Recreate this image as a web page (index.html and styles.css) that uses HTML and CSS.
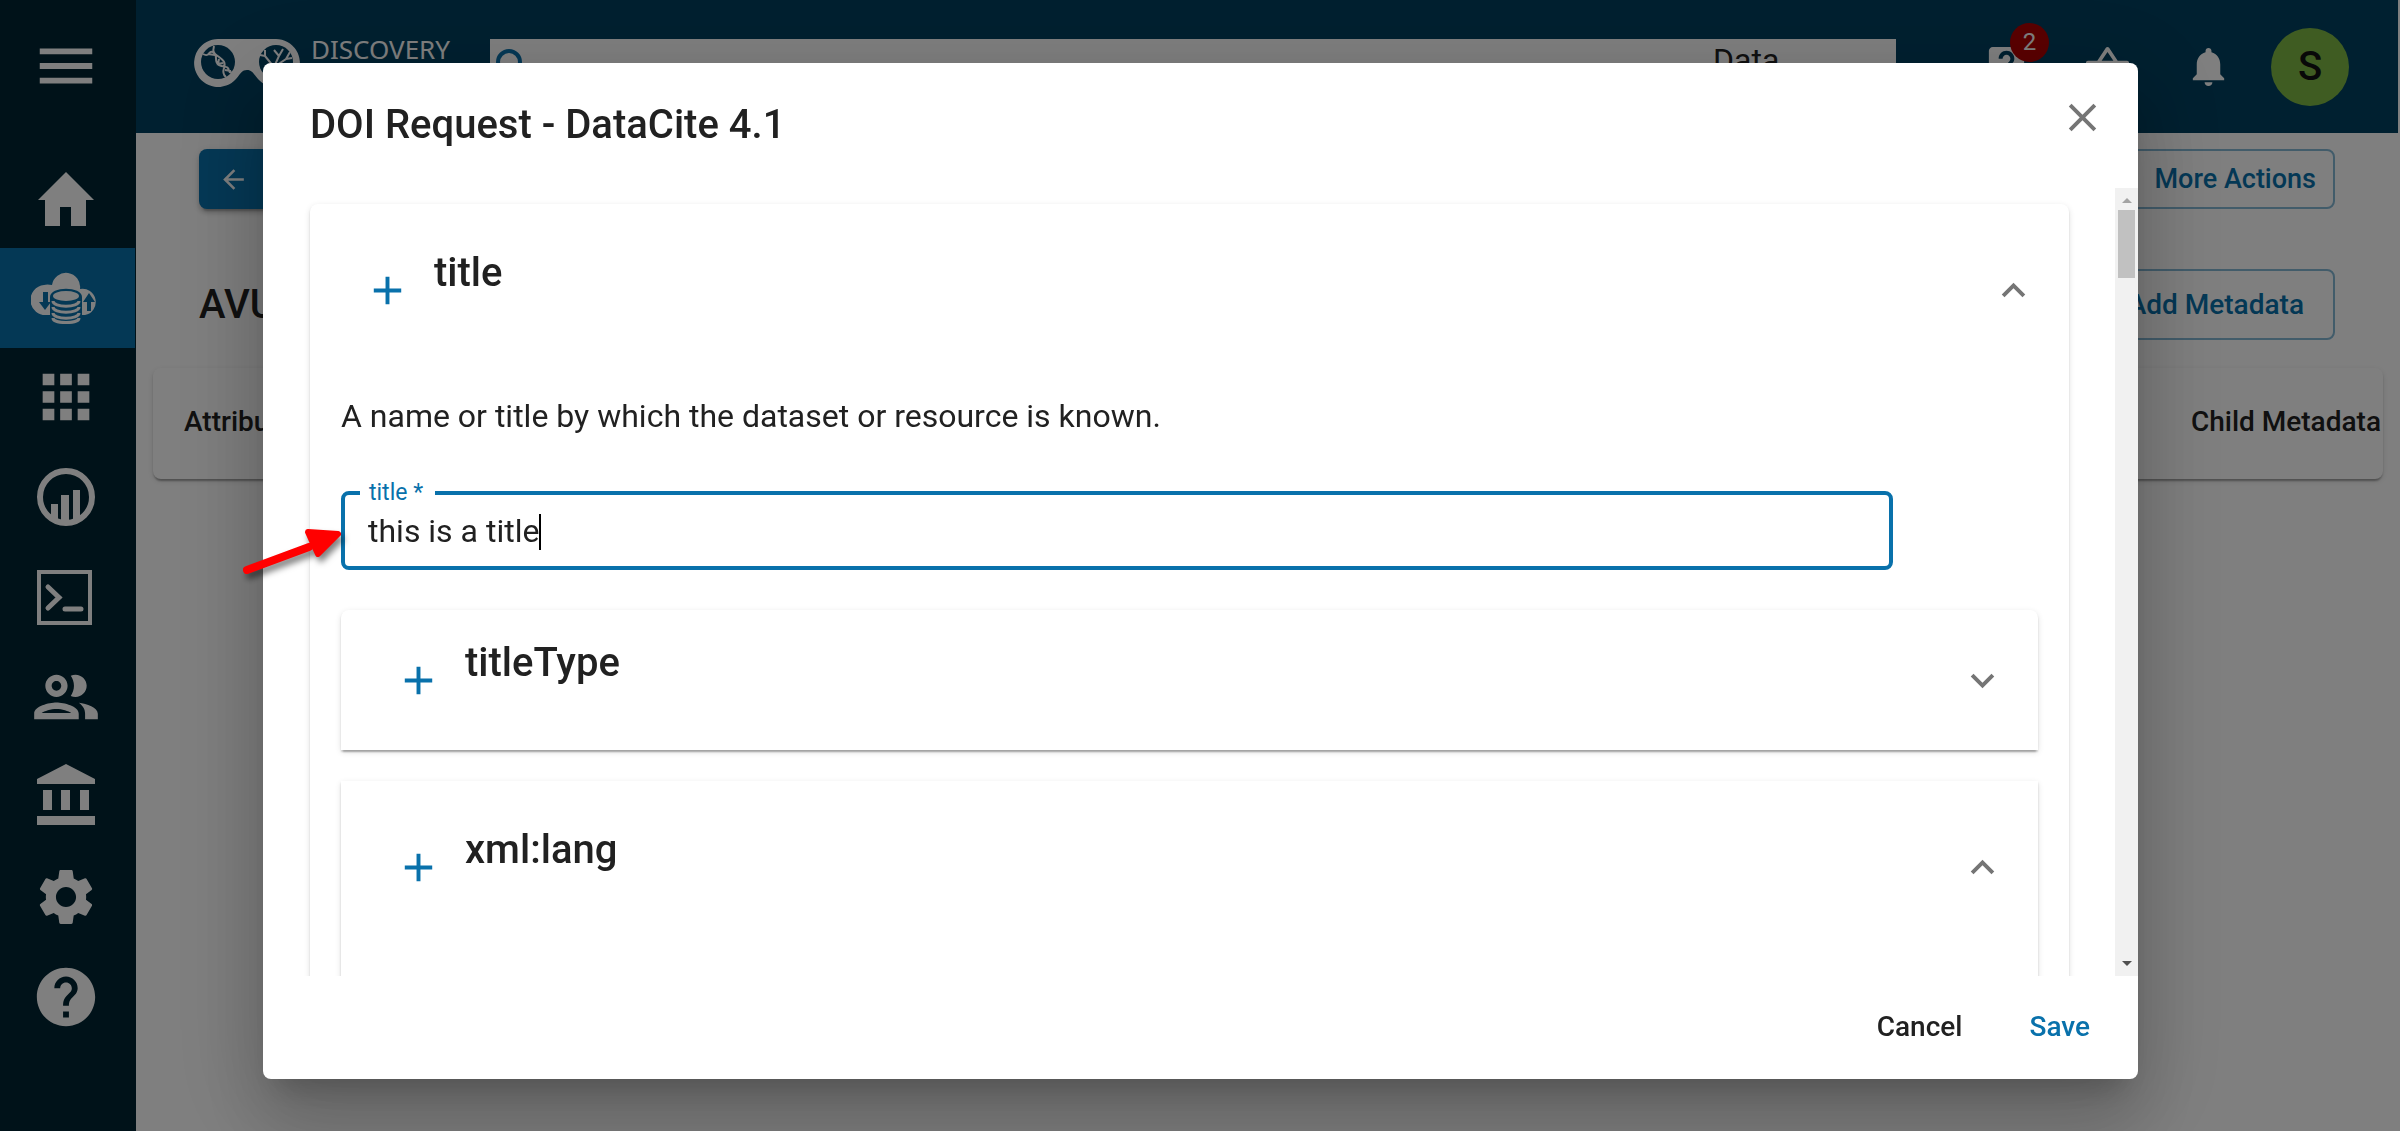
FILE: index.html
```html
<!DOCTYPE html>
<html lang="en">
<head>
<meta charset="utf-8">
<meta name="viewport" content="width=device-width, initial-scale=1">
<title>Discovery Environment</title>
<link rel="stylesheet" href="styles.css">
</head>
<body>
<div class="app">
  <nav class="sidebar" aria-label="Main">
    <button class="menu-button" type="button" aria-label="Menu"><svg class="icon-nav" viewBox="0 0 24 24"><path d="M3 18h18v-2H3v2zm0-5h18v-2H3v2zm0-7v2h18V6H3z"/></svg></button>
    <a class="nav-item" href="#home" aria-label="Home"><svg class="icon-nav" viewBox="0 0 70 70"><path d="M35 10L7 38h7v26h15V45h11v19h15V38h8z"/></svg></a>
    <a class="nav-item active" href="#data" aria-label="Data"><svg class="icon-nav" viewBox="0 0 70 70"><g transform="translate(0 -4)"><path d="M16 57a15 15 0 0 1-3-30q3-1 8 0a14 14 0 0 1 28 4 13 13 0 0 1 5 26z"/><path class="hole" d="M12 34h5v10h3l-6 8-6-8h4zM56 53v-9h-4l6-9 6 9h-4v9z" /><path class="hole" d="M19 39c0-11 32-11 32 0v19c0 9-32 9-32 0z"/><ellipse cx="35" cy="38" rx="13" ry="5"/><path class="ring" d="M22 43c0 7 26 7 26 0M22 49c0 7 26 7 26 0M22 55c0 7 26 7 26 0M22 60c0 6 26 6 26 0"/></g></svg></a>
    <a class="nav-item" href="#apps" aria-label="Apps"><svg class="icon-nav" viewBox="0 0 24 24"><path d="M4 8h4V4H4v4zm6 12h4v-4h-4v4zm-6 0h4v-4H4v4zm0-6h4v-4H4v4zm6 0h4v-4h-4v4zm6-10v4h4V4h-4zm-6 4h4V4h-4v4zm6 6h4v-4h-4v4zm0 6h4v-4h-4v4z"/></svg></a>
    <a class="nav-item" href="#analyses" aria-label="Analyses"><svg class="icon-nav" viewBox="0 0 70 70"><circle class="line" cx="35" cy="35" r="26"/><path d="M20 42h7v18l-7-4zM30 33h8v27h-8zM42 28h7v28l-7 4z"/></svg></a>
    <a class="nav-item" href="#vice" aria-label="Terminal"><svg class="icon-nav" viewBox="0 0 70 70"><path class="line square" d="M8 10h51v51H8z"/><path class="line thin" d="M17 25l11 10.500-11 10.500M34 47h16"/></svg></a>
    <a class="nav-item" href="#teams" aria-label="Teams"><svg class="icon-nav" viewBox="1 1 22 22"><path d="M9 13.750c-2.340 0-7 1.170-7 3.500V19h14v-1.750c0-2.330-4.660-3.500-7-3.500zM4.340 17c.84-.58 2.870-1.250 4.660-1.250s3.820.67 4.660 1.250H4.340zM9 12c1.930 0 3.500-1.570 3.500-3.500S10.930 5 9 5 5.500 6.570 5.500 8.500 7.070 12 9 12zm0-5c.83 0 1.500.67 1.500 1.500S9.830 10 9 10s-1.500-.67-1.500-1.500S8.170 7 9 7zm7.040 6.810c1.160.84 1.960 1.960 1.960 3.440V19h4v-1.750c0-2.020-3.500-3.170-5.960-3.440zM15 12c1.930 0 3.500-1.570 3.500-3.500S16.930 5 15 5c-.54 0-1.040.13-1.500.35.63.89 1 1.980 1 3.150s-.37 2.260-1 3.150c.46.22.96.35 1.500.35z"/></svg></a>
    <a class="nav-item" href="#collections" aria-label="Collections"><svg class="icon-nav" viewBox="0 0 70 70"><path d="M35 2L6 17v5h58v-5zM12 28h9v20h-9zM30 28h9v20h-9zM49 28h9v20h-9zM6 54h58v9H6z"/></svg></a>
    <a class="nav-item" href="#settings" aria-label="Settings"><svg class="icon-nav" viewBox="-.5 -.5 25 25"><path d="M19.140 12.940c.04-.3.060-.61.060-.94 0-.32-.02-.64-.07-.94l2.030-1.580c.18-.14.23-.41.120-.61l-1.920-3.320c-.12-.22-.37-.29-.59-.22l-2.390.960c-.5-.38-1.030-.7-1.620-.94l-.36-2.540c-.04-.24-.24-.41-.48-.41h-3.840c-.24 0-.43.17-.47.41l-.36 2.540c-.59.24-1.130.57-1.620.94l-2.390-.96c-.22-.08-.47 0-.59.220L2.740 8.870c-.12.21-.08.47.12.610l2.030 1.580c-.05.3-.09.63-.09.94s.02.640.070.940l-2.030 1.580c-.18.14-.23.41-.12.610l1.920 3.320c.12.22.37.29.59.220l2.390-.96c.5.38 1.030.7 1.620.940l.36 2.540c.05.24.24.41.48.410h3.840c.24 0 .44-.17.470-.41l.36-2.540c.59-.24 1.130-.56 1.620-.94l2.390.960c.22.08.47 0 .59-.22l1.920-3.320c.12-.22.07-.47-.12-.61l-2.010-1.580zM12 15.600c-1.980 0-3.600-1.620-3.600-3.600s1.620-3.600 3.600-3.600 3.600 1.620 3.600 3.600-1.620 3.600-3.600 3.600z"/></svg></a>
    <a class="nav-item" href="#help" aria-label="Help"><svg class="icon-nav" viewBox="0 0 24 24"><path d="M12 2C6.480 2 2 6.480 2 12s4.480 10 10 10 10-4.480 10-10S17.520 2 12 2zm1 17h-2v-2h2v2zm2.070-7.750l-.9.920C13.450 12.900 13 13.500 13 15h-2v-.5c0-1.100.45-2.100 1.170-2.830l1.240-1.260c.37-.36.59-.86.59-1.410 0-1.100-.9-2-2-2s-2 .9-2 2H8c0-2.210 1.790-4 4-4s4 1.790 4 4c0 .88-.36 1.680-.93 2.250z"/></svg></a>
  </nav>

  <div class="page">
    <header class="topbar">
      <a class="brand" href="#top">
        <svg class="brand-mark" viewBox="0 0 106 48"><path class="goggle" d="M24 0h58a24 24 0 1 1-18 40c-5-6-6-9-11-9s-6 3-11 9A24 24 0 1 1 24 0z"/><circle class="lens" cx="24" cy="23" r="17"/><circle class="lens" cx="82" cy="23" r="17"/><path class="twig" d="M9 15c7 4 5-4 10-2 6 3 0 10 6 13s9 0 10 6c1 3 4 1 5 0M20 7c-2 7 1 8 5 11s7 5 5 11 1 8 2 9M14 15l7 1M25 20l-1 5 5-1M31 31l6 1"/><path class="twig" d="M80 38V28l-9-11M71 17l-5-1M71 17v-6M80 28l5-11-5-6M85 17l4-7M80 28l12-8 4-7M92 20l6-1"/></svg>
        <span class="brand-name">DISCOVERY</span>
      </a>
      <form class="search" role="search">
        <svg class="icon-search" viewBox="0 0 40 40"><circle cx="15" cy="15" r="11"/><path d="M23 23l12 12"/></svg>
        <input class="search-input" type="search" aria-label="Search">
        <button class="search-scope" type="button">Data</button>
      </form>
      <div class="top-actions">
        <button class="top-button" type="button" aria-label="Support"><svg class="icon" viewBox="0 0 24 24"><path d="M19 2H5c-1.110 0-2 .9-2 2v14c0 1.100.89 2 2 2h4l3 3 3-3h4c1.100 0 2-.9 2-2V4c0-1.100-.9-2-2-2zm-6 16h-2v-2h2v2zm2.070-7.750l-.9.920C13.450 11.900 13 12.500 13 14h-2v-.5c0-1.100.45-2.100 1.170-2.830l1.240-1.260c.37-.36.59-.86.59-1.410 0-1.100-.9-2-2-2s-2 .9-2 2H8c0-2.210 1.790-4 4-4s4 1.790 4 4c0 .88-.36 1.680-.93 2.250z"/></svg><span class="badge">2</span></button>
        <button class="top-button" type="button" aria-label="Bag"><svg class="icon" viewBox="0 0 24 24"><path d="M17.210 9l-4.380-6.560c-.19-.28-.51-.42-.83-.42-.32 0-.64.14-.83.430L6.790 9H2c-.55 0-1 .45-1 1 0 .09.010.18.040.27l2.540 9.270c.23.84 1 1.460 1.920 1.460h13c.92 0 1.690-.62 1.930-1.460l2.540-9.270L23 10c0-.55-.45-1-1-1h-4.790zM9 9l3-4.400L15 9H9z"/></svg></button>
        <button class="top-button" type="button" aria-label="Notifications"><svg class="icon" viewBox="0 0 24 24"><path d="M12 22c1.100 0 2-.9 2-2h-4c0 1.100.89 2 2 2zm6-6v-5c0-3.070-1.640-5.640-4.500-6.320V4c0-.83-.67-1.500-1.500-1.500s-1.500.67-1.500 1.500v.68C7.630 5.360 6 7.920 6 11v5l-2 2v1h16v-1l-2-2z"/></svg></button>
        <button class="avatar" type="button" aria-label="Account">S</button>
      </div>
    </header>

    <main class="content">
      <div class="toolbar">
        <button class="back-button" type="button" aria-label="Back"><svg class="icon-back" viewBox="0 0 24 24"><path d="M20 11H7.830l5.590-5.590L12 4l-8 8 8 8 1.410-1.410L7.830 13H20v-2z"/></svg></button>
        <button class="outline-button" type="button">More Actions</button>
      </div>
      <div class="toolbar">
        <h2 class="heading">AVUs</h2>
        <button class="outline-button large" type="button">Add Metadata</button>
      </div>
      <div class="table-card">
        <table class="metadata">
          <thead><tr><th scope="col">Attribute</th><th class="last" scope="col">Child Metadata</th></tr></thead>
        </table>
      </div>
    </main>
  </div>
</div>

<div class="backdrop">
  <section class="dialog" role="dialog" aria-modal="true" aria-labelledby="dialog-title">
    <header class="dialog-header">
      <h1 class="heading" id="dialog-title">DOI Request - DataCite 4.1</h1>
      <button class="icon-button close" type="button" aria-label="Close"><svg class="icon" viewBox="0 0 24 24"><path d="M19 6.410L17.590 5 12 10.590 6.410 5 5 6.410 10.590 12 5 17.590 6.410 19 12 13.410 17.590 19 19 17.590 13.410 12z"/></svg></button>
    </header>
    <div class="dialog-body">
      <div class="dialog-content">
        <section class="panel">
          <div class="panel-header open">
            <button class="icon-button add" type="button" aria-label="Add title"><svg class="icon" viewBox="0 0 24 24"><path d="M19 13h-6v6h-2v-6H5v-2h6V5h2v6h6v2z"/></svg></button>
            <h2 class="heading">title</h2>
            <button class="icon-button" type="button" aria-label="Collapse title"><svg class="icon" viewBox="0 0 24 24"><path d="M12 8l-6 6 1.410 1.410L12 10.830l4.590 4.580L18 14z"/></svg></button>
          </div>
          <div class="panel-body">
            <p class="description">A name or title by which the dataset or resource is known.</p>
            <div class="field">
              <label class="field-label" for="title-input">title *</label>
              <input class="field-input" id="title-input" type="text" value="this is a title" required autofocus>
              <span class="caret"></span>
            </div>
            <section class="panel">
              <div class="panel-header">
                <button class="icon-button add" type="button" aria-label="Add titleType"><svg class="icon" viewBox="0 0 24 24"><path d="M19 13h-6v6h-2v-6H5v-2h6V5h2v6h6v2z"/></svg></button>
                <h3 class="heading">titleType</h3>
                <button class="icon-button" type="button" aria-label="Expand titleType"><svg class="icon" viewBox="0 0 24 24"><path d="M16.590 8.590L12 13.170 7.410 8.590 6 10l6 6 6-6z"/></svg></button>
              </div>
            </section>
            <section class="panel">
              <div class="panel-header open">
                <button class="icon-button add" type="button" aria-label="Add xml:lang"><svg class="icon" viewBox="0 0 24 24"><path d="M19 13h-6v6h-2v-6H5v-2h6V5h2v6h6v2z"/></svg></button>
                <h3 class="heading">xml:lang</h3>
                <button class="icon-button" type="button" aria-label="Collapse xml:lang"><svg class="icon" viewBox="0 0 24 24"><path d="M12 8l-6 6 1.410 1.410L12 10.830l4.590 4.580L18 14z"/></svg></button>
              </div>
              <div class="panel-body empty"></div>
            </section>
          </div>
        </section>
      </div>
      <div class="scrollbar" aria-hidden="true">
        <span class="scroll-arrow up"></span>
        <span class="scroll-thumb"></span>
        <span class="scroll-arrow down"></span>
      </div>
    </div>
    <footer class="dialog-footer">
      <button class="text-button" type="button">Cancel</button>
      <button class="text-button primary" type="button">Save</button>
    </footer>
    <svg class="pointer" viewBox="0 0 110 60"><path class="shaft" d="M10 44L72 21"/><path class="head" d="M101 8L71 6l10 22z"/></svg>
  </section>
</div>
</body>
</html>
```

FILE: styles.css
```css
* {
  box-sizing: border-box;
}

:root {
  --blue: #0971ab;
  --navy: #004060;
  --ink: #212121;
  --paper-shadow: 0 4px 2px -2px rgba(0, 0, 0, 0.2), 0 2px 2px rgba(0, 0, 0, 0.14), 0 2px 6px rgba(0, 0, 0, 0.12);
}

body {
  margin: 0;
  background: #fff;
  color: var(--ink);
  font-family: Roboto, sans-serif;
  font-size: 32px;
  line-height: 47px;
  overflow: hidden;
}

button,
input {
  margin: 0;
  padding: 0;
  border: 0;
  background: none;
  color: inherit;
  font: inherit;
}

svg {
  display: block;
  flex: none;
  fill: currentColor;
}

.app {
  display: flex;
  height: 100vh;
}

/* Sidebar */
.sidebar {
  flex: none;
  width: 136px;
  padding-right: 1px;
  background: #002432;
  color: #fff;
}

.menu-button,
.nav-item {
  display: flex;
  align-items: center;
  width: 100%;
  height: 100px;
  padding: 0 0 2px 31px;
  color: #fff;
}

.menu-button {
  height: 133px;
  margin-bottom: 15px;
}

.nav-item.active {
  background: var(--blue);
}

.icon-nav {
  width: 70px;
  height: 70px;
}

.icon-nav .line {
  fill: none;
  stroke: #fff;
  stroke-width: 6;
  stroke-linecap: round;
}

.icon-nav .square {
  stroke-width: 4;
}

.icon-nav .thin {
  stroke-width: 5;
}

.icon-nav .hole {
  fill: var(--blue);
}

.icon-nav .ring {
  fill: none;
  stroke: #fff;
  stroke-width: 3;
}

/* Top bar */
.page {
  flex: 1;
  min-width: 0;
}

.topbar {
  display: flex;
  height: 133px;
  margin-right: 2px;
  padding: 0 49px 0 58px;
  background: var(--navy);
  color: #fff;
}

.brand {
  display: flex;
  flex: none;
  gap: 11px;
  width: 296px;
  padding-top: 39px;
  color: #fff;
  text-decoration: none;
}

.brand-mark {
  width: 106px;
  height: 48px;
}

.lens {
  fill: var(--navy);
}

.twig {
  fill: none;
  stroke: #fff;
  stroke-width: 2;
}

.brand-name {
  font-family: "Noto Sans", sans-serif;
  font-size: 26px;
  line-height: 20px;
}

.search {
  display: flex;
  flex: 1;
  align-items: flex-start;
  height: 55px;
  margin-top: 39px;
  background: #fff;
}

.icon-search {
  width: 40px;
  height: 40px;
  margin: 8px 0 0 4px;
  fill: none;
  stroke: var(--blue);
  stroke-width: 4;
}

.search-input {
  flex: 1;
  height: 55px;
}

.search-scope {
  width: 183px;
  color: var(--ink);
  font-size: 32px;
  line-height: 43px;
  text-align: left;
}

.top-actions {
  display: flex;
  flex: none;
  align-items: center;
  gap: 54px;
  margin-left: 87px;
}

.top-button {
  position: relative;
}

.icon {
  width: 47px;
  height: 47px;
}

.badge {
  position: absolute;
  top: -20px;
  left: 27px;
  width: 39px;
  height: 39px;
  border-radius: 50%;
  background: #b40000;
  font-size: 24px;
  line-height: 39px;
  text-align: center;
}

.avatar {
  width: 78px;
  height: 78px;
  margin-left: -15px;
  border-radius: 50%;
  background: #7fb945;
  color: #111;
  font-size: 40px;
  font-weight: 500;
}

/* Page content */
.content {
  display: flex;
  flex-direction: column;
  padding-top: 16px;
}

.toolbar {
  display: flex;
  align-items: center;
  justify-content: space-between;
  margin-bottom: 60px;
  padding: 0 65px 0 63px;
}

.toolbar + .toolbar {
  margin-bottom: 28px;
}

.back-button {
  width: 120px;
  height: 60px;
  padding-left: 19px;
  border-radius: 8px;
  background: var(--blue);
  box-shadow: 0 6px 2px -4px rgba(0, 0, 0, 0.2), 0 4px 4px rgba(0, 0, 0, 0.14), 0 2px 10px rgba(0, 0, 0, 0.12);
  color: #fff;
}

.icon-back {
  width: 31px;
  height: 31px;
}

.outline-button {
  height: 60px;
  padding: 0 17px 0 80px;
  border: 2px solid #84b8d5;
  border-radius: 8px;
  color: var(--blue);
  font-size: 27px;
  font-weight: 500;
}

.outline-button.large {
  height: 71px;
  padding-right: 29px;
  font-size: 28px;
}

.heading {
  margin: 0;
  font-size: 40px;
  font-weight: 500;
  line-height: 62px;
}

.table-card {
  margin: 0 17px;
  border-radius: 8px;
  background: #fff;
  box-shadow: var(--paper-shadow);
}

.metadata {
  width: 100%;
  border-collapse: collapse;
}

.metadata th {
  height: 111px;
  padding: 0 0 5px 31px;
  font-size: 28px;
  font-weight: 500;
  text-align: left;
}

.metadata .last {
  padding-right: 2px;
  text-align: right;
}

/* Dialog */
.backdrop {
  position: fixed;
  inset: 0;
  display: flex;
  justify-content: center;
  padding: 63px 262px 52px 263px;
  background: rgba(0, 0, 0, 0.5);
}

.dialog {
  position: relative;
  display: flex;
  flex: 1;
  flex-direction: column;
  border-radius: 8px;
  background: #fff;
  box-shadow: 0 21px 29px -14px rgba(0, 0, 0, 0.2), 0 47px 74px 6px rgba(0, 0, 0, 0.14), 0 18px 90px 16px rgba(0, 0, 0, 0.12);
}

.dialog-header {
  display: flex;
  flex: none;
  align-items: flex-start;
  justify-content: space-between;
  height: 125px;
  padding: 31px 32px 0 47px;
}

.icon-button {
  color: #757575;
}

.close {
  width: 47px;
  height: 47px;
}

.add {
  color: var(--blue);
}

.dialog-body {
  display: flex;
  flex: 1;
  min-height: 0;
}

.dialog-content {
  flex: 1;
  padding: 16px 46px 0 47px;
  overflow: hidden;
}

.panel {
  border-radius: 8px 8px 0 0;
  background: #fff;
  box-shadow: var(--paper-shadow);
}

.panel + .panel {
  margin-top: 31px;
  border-radius: 0;
}

.panel-header {
  display: flex;
  align-items: center;
  gap: 23px;
  height: 140px;
  padding: 0 32px 0 54px;
}

.panel-header.open {
  height: 172px;
}

.panel-header .heading {
  flex: 1;
  margin-bottom: 34px;
}

.panel-body {
  padding: 17px 31px 31px;
}

.empty {
  height: 200px;
}

.description {
  margin: 0 0 51px;
}

.field {
  position: relative;
  margin: 0 145px 40px 0;
}

.field-label {
  position: absolute;
  top: -12px;
  left: 19px;
  padding: 0 12px 0 9px;
  background: #fff;
  color: var(--blue);
  font-size: 23px;
  line-height: 27px;
}

.field-input {
  display: block;
  width: 100%;
  height: 79px;
  padding: 0 23px;
  border: 4px solid var(--blue);
  border-radius: 8px;
  caret-color: transparent;
  outline: none;
}

.caret {
  position: absolute;
  top: 23px;
  left: 198px;
  width: 2px;
  height: 36px;
  background: #000;
}

.scrollbar {
  display: flex;
  flex: none;
  flex-direction: column;
  align-items: center;
  width: 23px;
  background: #f1f1f1;
}

.scroll-arrow {
  flex: none;
  border: 5px solid transparent;
}

.up {
  margin: 5px 0 7px;
  border-bottom: 5px solid #a3a3a3;
}

.down {
  margin: auto 0 5px;
  border-top: 5px solid #505050;
}

.scroll-thumb {
  width: 17px;
  height: 68px;
  background: #c1c1c1;
}

.dialog-footer {
  display: flex;
  flex: none;
  align-items: center;
  justify-content: flex-end;
  gap: 67px;
  height: 103px;
  padding: 0 48px 3px;
}

.text-button {
  font-size: 28px;
  font-weight: 500;
}

.text-button.primary {
  color: var(--blue);
}

/* Annotation arrow beside the title field */
.pointer {
  position: absolute;
  top: 463px;
  left: -26px;
  width: 110px;
  height: 60px;
  filter: drop-shadow(3px 5px 3px rgba(0, 0, 0, 0.5));
}

.shaft {
  stroke: #f00;
  stroke-width: 8;
  stroke-linecap: round;
}

.head {
  fill: #f00;
  stroke: #f00;
  stroke-width: 6;
  stroke-linejoin: round;
}
```
